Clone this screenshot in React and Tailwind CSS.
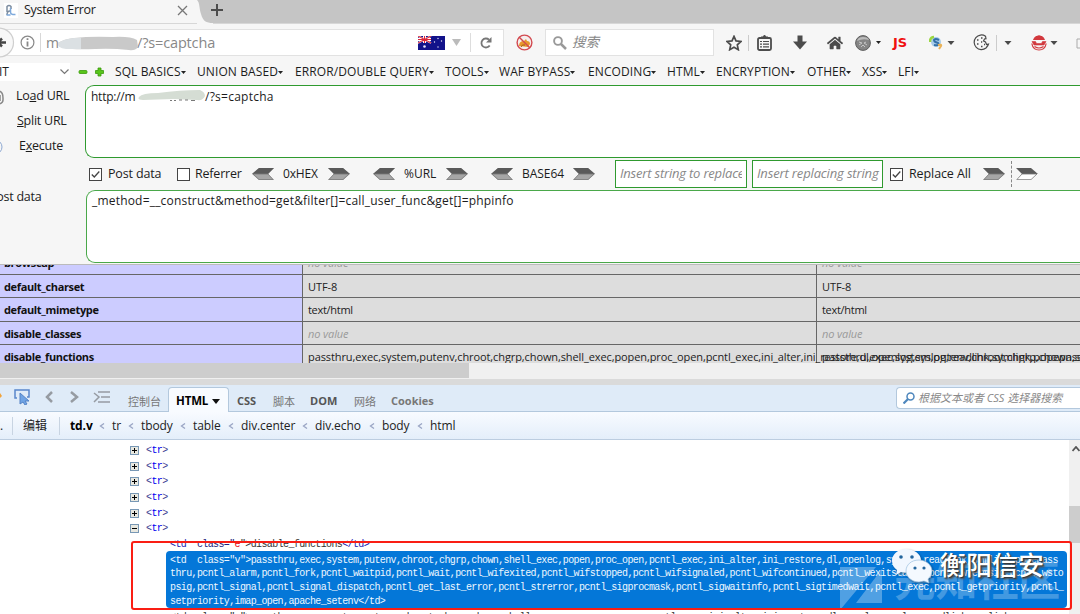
import { FaHome } from 'react-icons/fa';

const menus = [
  { label: 'SQL BASICS', cls: 'w-[82px]' },
  { label: 'UNION BASED', cls: 'w-[98px]' },
  { label: 'ERROR/DOUBLE QUERY', cls: 'w-[150px]' },
  { label: 'TOOLS', cls: 'w-[54px]' },
  { label: 'WAF BYPASS', cls: 'w-[89px]' },
  { label: 'ENCODING', cls: 'w-[79px]' },
  { label: 'HTML', cls: 'w-[49px]' },
  { label: 'ENCRYPTION', cls: 'w-[91px]' },
  { label: 'OTHER', cls: 'w-[55px]' },
  { label: 'XSS', cls: 'w-[36px]' },
  { label: 'LFI', cls: 'w-[40px]' },
];

const disabled =
  'passthru,exec,system,putenv,chroot,chgrp,chown,shell_exec,popen,proc_open,pcntl_exec,ini_alter,ini_restore,dl,openlog,syslog,readlink,symlink,popepassthru,pcntl_alarm';

const rows = [
  { name: 'browscap', value: null },
  { name: 'default_charset', value: 'UTF-8' },
  { name: 'default_mimetype', value: 'text/html', cls: 'tracking-[-0.3px]' },
  { name: 'disable_classes', value: null },
  { name: 'disable_functions', value: disabled },
];

const crumbs = [
  { label: 'tr', cls: 'w-[29px]' },
  { label: 'tbody', cls: 'w-[52px]' },
  { label: 'table', cls: 'w-[48px]' },
  { label: 'div.center', cls: 'w-[74px]' },
  { label: 'div.echo', cls: 'w-[67px]' },
  { label: 'body', cls: 'w-[48px]' },
  { label: 'html', cls: 'w-[40px]' },
];

const codeLines = [
  '<td  class="v">passthru,exec,system,putenv,chroot,chgrp,chown,shell_exec,popen,proc_open,pcntl_exec,ini_alter,ini_restore,dl,openlog,syslog,readlink,symlink,popepass',
  'thru,pcntl_alarm,pcntl_fork,pcntl_waitpid,pcntl_wait,pcntl_wifexited,pcntl_wifstopped,pcntl_wifsignaled,pcntl_wifcontinued,pcntl_wexitstatus,pcntl_wtermsig,pcntl_wsto',
  'psig,pcntl_signal,pcntl_signal_dispatch,pcntl_get_last_error,pcntl_strerror,pcntl_sigprocmask,pcntl_sigwaitinfo,pcntl_sigtimedwait,pcntl_exec,pcntl_getpriority,pcntl_',
  'setpriority,imap_open,apache_setenv</td>',
];

const Caret = ({ className = '' }) => (
  <svg className={`h-1 w-2 shrink-0 ${className}`} viewBox="0 0 8 4">
    <path d="M0.5 0h7L4 4z" fill="#4a4a4a" />
  </svg>
);

const Arrow = ({ left = false, hollow = false, className = '' }) => (
  <svg className={`h-3 w-[22px] shrink-0 ${left ? '-scale-x-100' : ''} ${className}`} viewBox="0 0 22 12">
    <path d="M0 0h15l7 6-7 6H0l6-6z" fill={hollow ? '#fff' : '#a6a6a6'} />
    <path d="M0 0h15l7 6H6z" fill="#5a5a5a" />
    <path d="M0.8 11.6 6 6h15l-6 5.6z" fill="none" stroke="#777" strokeWidth="0.8" />
  </svg>
);

const Checkbox = ({ checked = false }) => (
  <svg className="h-[13px] w-[13px] shrink-0" viewBox="0 0 13 13" fill="none" stroke="#444">
    <rect x="0.5" y="0.5" width="12" height="12" fill="#fff" />
    {checked && <path d="M2.8 6.5 5.3 9l5-5.5" strokeWidth="1.3" />}
  </svg>
);

const TabBar = () => (
  <div className="flex h-6 border-b border-[#d7d7d7] bg-[#c5c5c5]">
    <div className="flex w-[197px] items-center bg-[#f6f6f6] pb-[3px]">
      <svg className="ml-1 h-[15px] w-[14px]" viewBox="0 0 14 15" fill="none">
        <rect width="14" height="15" fill="#fff" />
        <path d="M3 9V3.5q2-2 4 0V6M6 8q-3 0-3 4" stroke="#7d8da0" strokeWidth="1.5" />
        <path d="M6.5 5v4q0 3 5 2.5M2.5 12h4" stroke="#7da9dc" strokeWidth="1.5" />
      </svg>
      <span className="ml-[6px] w-[153px] text-[12.5px] tracking-[-0.3px]">System Error</span>
      <svg className="h-[11px] w-[11px]" viewBox="0 0 11 11" stroke="#777" strokeWidth="1.3">
        <path d="m1 1 9 9m0-9-9 9" />
      </svg>
    </div>
    <svg className="h-6 w-4" viewBox="0 0 16 24">
      <path d="M0 0c3 3 2 8 4 14 2 7 5 9 12 9v1H0z" fill="#f6f6f6" />
    </svg>
    <svg className="-ml-[2px] mt-1 h-3 w-3" viewBox="0 0 12 12" stroke="#4c4c4c" strokeWidth="2">
      <path d="M6 0v12M0 6h12" />
    </svg>
  </div>
);

const NavBar = () => (
  <div className="flex h-[37px] items-center overflow-hidden bg-[#f6f6f6]">
    <div className="relative flex h-[27px] w-[504px] shrink-0 items-center border border-l-0 border-[#e2e2e2] bg-white">
      <svg className="-my-1 h-[31px] w-[15px] shrink-0" viewBox="0 0 15 31">
        <circle cx="-1" cy="15.5" r="14.5" fill="#f8f8f8" stroke="#cfcfcf" strokeWidth="1.2" />
        <path d="M0 15.5h6M2 11.5l-4 4 4 4" stroke="#444" strokeWidth="2.5" fill="none" />
      </svg>
      <svg className="ml-[5px] h-[15px] w-[15px] shrink-0" viewBox="0 0 15 15" fill="none" stroke="#888">
        <circle cx="7.5" cy="7.5" r="6.4" strokeWidth="1.2" />
        <path d="M7.5 6.5v5M7.5 3.2v1.8" strokeWidth="1.8" />
      </svg>
      <div className="ml-[5px] h-[19px] w-px bg-[#d8d8d8]" />
      <span className="ml-[5px] w-[91px] shrink-0 text-[14px] text-[#888]">m</span>
      <svg className="absolute left-[57px] top-[6px] h-4 w-[84px]" viewBox="0 0 84 16" preserveAspectRatio="none">
        <path d="M1 7q6-4 16-5Q34 0 56 1q17-1 24 3l1 7q-3 4-9 3-18-2-34-1-21 1-30-1-8-1-7-5z" fill="#c9c9c9" />
        <path d="M1 7q6-4 16-5l7 0v11H9Q0 12 1 7z" fill="#dbe0e3" />
      </svg>
      <span className="w-[281px] shrink-0 text-[14.5px] tracking-[-0.15px] text-[#888]">/?s=captcha</span>
      <svg className="h-[14px] w-[27px] shrink-0" viewBox="0 0 27 14">
        <rect width="27" height="14" fill="#12128a" />
        <path d="m0 0 13 7M13 0 0 7" stroke="#fff" strokeWidth="1.8" />
        <path d="M6.5 0v7M0 3.5h13" stroke="#fff" strokeWidth="3" />
        <path d="M6.5 0v7M0 3.5h13M0 0l13 7M13 0 0 7" stroke="#dc2638" strokeWidth="1.1" />
        <g fill="#e7e7f8">
          <circle cx="6.5" cy="10.5" r="1.3" />
          <circle cx="20" cy="2.5" r="0.7" />
          <circle cx="16.5" cy="6" r="0.7" />
          <circle cx="23.5" cy="5" r="0.7" />
          <circle cx="20" cy="11" r="0.7" />
        </g>
      </svg>
      <svg className="ml-[7px] h-[7px] w-[9px] shrink-0" viewBox="0 0 9 7">
        <path d="M0 0h9L4.5 7z" fill="#bbb" />
      </svg>
      <div className="ml-[9px] h-[19px] w-px bg-[#ddd]" />
      <svg className="ml-[9px] h-3 w-3 shrink-0" viewBox="0 0 12 12" fill="none" stroke="#777" strokeWidth="1.8">
        <path d="M9.7 8.5A4.5 4.5 0 1 1 9 2.7" />
        <path d="M11.5 0v5.5H6z" fill="#777" stroke="none" />
      </svg>
    </div>
    <svg className="ml-[12px] h-[17px] w-[17px] shrink-0" viewBox="0 0 17 17" fill="none">
      <circle cx="8.5" cy="8.5" r="7.5" fill="#f5eeee" />
      <path d="M3 12q0-5 5-5l2-2 1 2q3 0 3 3l-2 3z" fill="#e8982d" />
      <path d="M5 13q1-3 4-2" stroke="#a55a13" />
      <circle cx="8.5" cy="8.5" r="7.4" stroke="#d24a50" strokeWidth="1.4" />
      <path d="m3 3 11 11" stroke="#d24a50" strokeWidth="1.4" />
    </svg>
    <div className="ml-[12px] flex h-[27px] w-[169px] shrink-0 items-center border border-[#e2e2e2] bg-white">
      <svg className="ml-[7px] h-[14px] w-[14px]" viewBox="0 0 14 14" fill="none" stroke="#999">
        <circle cx="5" cy="5" r="3.9" strokeWidth="1.9" />
        <path d="m8 8 5 5" strokeWidth="2.5" />
      </svg>
      <span className="ml-[5px] text-[13.5px] italic text-[#888]">搜索</span>
    </div>
    <svg className="ml-3 h-4 w-4 shrink-0" viewBox="0 0 16 16" fill="none" stroke="#4c4c4c" strokeWidth="1.7">
      <path d="m8 1.4 2 4.5 5 .5-3.7 3.4 1 4.9L8 12.2l-4.3 2.5 1-4.9L1 6.4l5-.5z" />
    </svg>
    <div className="ml-[6px] h-4 w-px shrink-0 bg-[#ccc]" />
    <svg className="ml-2 h-4 w-[15px] shrink-0" viewBox="0 0 15 16" fill="none" stroke="#4c4c4c">
      <rect x="1" y="3" width="13" height="12" rx="1.5" strokeWidth="1.8" />
      <path d="M4 3V2h2l1.5-2L9 2h2v1" fill="#4c4c4c" />
      <path d="M3 6.5h2m1 0h6M3 9.2h2m1 0h6M3 11.9h2m1 0h6" strokeWidth="1.2" />
    </svg>
    <svg className="ml-[21px] h-[15px] w-[14px] shrink-0" viewBox="0 0 14 15">
      <path d="M4.5 0.5h5v6H14l-7 8-7-8h4.5z" fill="#4c4c4c" />
    </svg>
    <FaHome className="ml-[20px] h-4 w-4 shrink-0 text-[#4c4c4c]" />
    <svg className="ml-[12px] h-4 w-4 shrink-0" viewBox="0 0 16 16">
      <circle cx="8" cy="8" r="7.4" fill="#858585" stroke="#5f5f5f" />
      <path d="M2 6q1-4 6-4 5 0 6 3-6-2-12 1z" fill="#bbb" />
      <path d="m4 7 3 1-3 2m7-3-2 1 3 2M6 12l2-2 2 2" stroke="#c5c5c5" fill="none" />
    </svg>
    <svg className="ml-[5px] h-[3px] w-[5px] shrink-0" viewBox="0 0 5 3">
      <path d="M0 0h5L2.5 3z" fill="#222" />
    </svg>
    <span className="ml-[12px] w-[16px] shrink-0 font-['DejaVu_Sans',sans-serif] text-[13px] font-extrabold tracking-[0px] text-[#f01010]">JS</span>
    <svg className="ml-[20px] h-4 w-[15px] shrink-0" viewBox="0 0 15 16" fill="none">
      <circle cx="7" cy="7" r="5" fill="#a7cce9" />
      <path d="M1 7q0-5 4-5" stroke="#9bd641" strokeWidth="2.5" />
      <path d="M10 5q-4-2-5 0 0 2 4 3 2 3-4 2" stroke="#3470a8" strokeWidth="2" />
      <path d="M9 10q4-1 3 1l-2 3" stroke="#e9b35a" strokeWidth="2" />
    </svg>
    <Caret className="ml-[3px]" />
    <svg className="ml-[18px] h-[17px] w-[17px] shrink-0" viewBox="0 0 17 17" fill="none" stroke="#4a4a4a" strokeWidth="1.2">
      <path d="M12.5 2.2A7.3 7.3 0 1 0 13 14q2-2 2.5-4l-2 .5-1-2.5-2-1 1-2 1.5-.3z" />
      <path d="M4 6h1.5M8 4h1.5M4 10h1.5M8 8h1.2M8 12.5h1.5M11 10.5h1" strokeWidth="1.6" />
    </svg>
    <div className="ml-[6px] h-4 w-px shrink-0 bg-[#ccc]" />
    <Caret className="ml-[7px]" />
    <svg className="ml-[19px] h-4 w-4 shrink-0" viewBox="0 0 16 16" fill="none" stroke="#d2383d">
      <path d="M2.5 4.5Q4 .8 8 .8t5.5 3.7z" fill="#d2383d" />
      <path d="M1 6.5h3.5l1 2h5l1-2H15l-2 3.500H3z" fill="#d2383d" strokeWidth="0.6" />
      <path d="M.8 8.5Q2 15 8 15t7.2-6.5M3.5 11.5q4.5 3 9 0" strokeWidth="1.2" />
    </svg>
    <Caret className="ml-[3px]" />
    <svg className="ml-[18px] h-[13px] w-3 shrink-0" viewBox="0 0 12 13" fill="none" stroke="#aaa">
      <path d="M1 3v9h11M1 3h3l2 2V1h6" />
    </svg>
  </div>
);

const MenuBar = () => (
  <div className="flex h-[22px] items-center text-[12px]">
    <div className="flex h-[18px] w-[70px] shrink-0 items-center bg-white">
      <span className="w-[60px] overflow-hidden"><span className="-ml-[1px]">IT</span></span>
      <svg className="h-[6px] w-[9px]" viewBox="0 0 9 6" fill="none" stroke="#777" strokeWidth="1.2">
        <path d="m.5.5 4 4 4-4" />
      </svg>
    </div>
    <svg className="ml-[8px] h-[10px] w-[27px] shrink-0" viewBox="0 0 27 10" fill="#58c51b" stroke="#3b9b0b" strokeWidth="0.8">
      <rect x="1" y="3.5" width="8" height="3" rx="1" />
      <path d="M20 1h3v2.5h2.5v3H23V9h-3V6.5h-2.5v-3H20z" />
    </svg>
    <div className="ml-[10px] flex tracking-[0.1px]">
      {menus.map((m) => (
        <div key={m.label} className={`flex shrink-0 items-center whitespace-nowrap ${m.cls}`}>
          {m.label}
          <svg className="h-[3px] w-[5px]" viewBox="0 0 5 3">
            <path d="M0 0h5L2.5 3z" fill="#222" />
          </svg>
        </div>
      ))}
    </div>
  </div>
);

const HackBar = () => (
  <div className="flex h-[181px] shrink-0 overflow-hidden text-[12.5px] tracking-[-0.25px]">
    <div className="flex w-[85px] shrink-0 flex-col pt-px">
      <div className="flex h-[25px] items-center">
        <svg className="h-4 w-[16px]" viewBox="0 0 16 16" fill="none" stroke="#888" strokeWidth="1.5">
          <path d="M-2 2q5 0 5 7v2q0 3-4 4M0 6v6" />
        </svg>
        Lo<u>a</u>d URL
      </div>
      <div className="flex h-[25px] items-center pl-[17px]"><u>S</u>plit URL</div>
      <div className="flex h-[25px] items-center">
        <svg className="h-4 w-[19px]" viewBox="0 0 19 16" fill="none" stroke="#8ea9d2">
          <circle cx="-5" cy="8" r="7" />
        </svg>
        E<u>x</u>ecute
      </div>
      <div className="-ml-[11px] mt-[28px] h-5 leading-5">Post data</div>
    </div>
    <div className="flex min-w-0 grow flex-col pt-[2px]">
      <div className="relative h-[73px] shrink-0 rounded-l-[9px] border border-r-0 border-[#2f9a2f] bg-white pl-[5px] pt-[2px] leading-[18px]">
        <span className="inline-block w-[114px] text-[12px]">http://m</span>
        <span className="text-[12px] tracking-[0.25px]">/?s=captcha</span>
        <svg className="absolute left-[52px] top-[4px] h-3 w-[68px]" viewBox="0 0 68 12">
          <path d="M1 7Q4 3 20 3 42 0 62 0q5 2 5 6-2 5-8 4l-24-1-30 1q-6 0-4-3z" fill="#d5ddd4" />
          <path d="M32 10.5h2m2 0h2m3-.5h3m3 0h3m3 .5h4" stroke="#555" strokeWidth="0.8" />
        </svg>
      </div>
      <div className="flex h-8 shrink-0 items-center pl-[4px]">
        <Checkbox checked />
        <span className="ml-[6px] w-[69px] shrink-0 tracking-[-0.15px]">Post data</span>
        <Checkbox />
        <span className="ml-[5px] w-[57px] shrink-0 tracking-[-0.2px]">Referrer</span>
        <Arrow left />
        <span className="ml-[9px] w-[45px] shrink-0 text-[12px] tracking-[-0.15px]">0xHEX</span>
        <Arrow />
        <Arrow left className="ml-[23px]" />
        <span className="ml-[9px] w-[42px] shrink-0 text-[12px] tracking-normal">%URL</span>
        <Arrow />
        <Arrow left className="ml-[23px]" />
        <span className="ml-[9px] w-[51px] shrink-0 text-[12px] tracking-[-0.05px]">BASE64</span>
        <Arrow />
        <div className="ml-[20px] flex h-7 w-[132px] shrink-0 items-center border border-[#2f9a2f] bg-white px-1">
          <span className="overflow-hidden whitespace-nowrap text-[13px] italic tracking-[-0.2px] text-[#888]">Insert string to replace</span>
        </div>
        <div className="ml-[5px] flex h-7 w-[131px] shrink-0 items-center border border-[#2f9a2f] bg-white pl-1">
          <span className="whitespace-nowrap text-[13px] italic tracking-[-0.15px] text-[#888]">Insert replacing string</span>
        </div>
        <div className="ml-[7px] flex shrink-0 items-center">
          <Checkbox checked />
          <span className="ml-[6px] w-[74px] tracking-[-0.1px]">Replace All</span>
          <Arrow />
          <div className="ml-[6px] h-[26px] border-l border-dashed border-[#888]" />
          <Arrow hollow className="ml-[4px]" />
        </div>
      </div>
      <div className="ml-[1px] h-[73px] shrink-0 rounded-l-[9px] border border-r-0 border-[#4aa84a] bg-white pl-[5px] pt-[1px] text-[12px] leading-[18px] tracking-[0.19px]">
        _method=__construct&amp;method=get&amp;filter[]=call_user_func&amp;get[]=phpinfo
      </div>
    </div>
  </div>
);

const Value = ({ value, cls = '' }) =>
  value ? <span className={cls}>{value}</span> : <span className="italic text-[#999]">no value</span>;

const PhpInfo = () => (
  <div className="flex h-[99px] shrink-0 flex-col justify-start overflow-hidden border-t border-[#bbb] text-[11px] tracking-[-0.1px]">
    <div className="-mt-[14px]">
      {rows.map((row) => (
        <div key={row.name} className="grid h-[23.6px] grid-cols-[302.5px_514.5px_263px] grid-rows-[22.6px] whitespace-nowrap border-b border-[#666] bg-[#ddd] leading-[23px]">
          <div className="h-[22.6px] border-r border-[#666] bg-[#ccf] pl-1 font-bold tracking-[-0.35px] text-[#111]">{row.name}</div>
          <div className="h-[22.6px] border-r border-[#666] pl-[5.5px] text-[#222]"><Value value={row.value} cls={row.cls} /></div>
          <div className="h-[22.6px] pl-[5px] text-[#222]"><Value value={row.value} cls={row.cls} /></div>
        </div>
      ))}
    </div>
  </div>
);

const Firebug = () => (
  <>
    <div className="flex h-[27px] shrink-0 items-end border-b border-[#b3c8dd] bg-[#dfebf8] text-[11px] font-bold text-[#555]">
      <svg className="mb-[6px] h-4 w-[110px] shrink-0" viewBox="0 0 110 16" fill="none">
        <path d="M0 4l2 3-2 2z" fill="#f2a33a" />
        <path d="M17 9h-2V1h14v7h-2" stroke="#5a87ca" strokeWidth="1.5" />
        <path d="M20 4v11l3-2 2 3 2-1-2-3h4z" fill="#6fa3e4" stroke="#5583c6" />
        <path d="m52 3-5 5 5 5M71 3l6 5-6 5" stroke="#969ba2" strokeWidth="2.5" />
        <path d="m94 4 5 4-5 5M98 3h12m-9 5h9m-12 5h12" stroke="#969ba2" strokeWidth="1.5" />
      </svg>
      <span className="ml-[18px] w-[40px] shrink-0 pb-[1px] font-normal text-[#777]">控制台</span>
      <div className="-mb-px flex h-[25px] w-[61px] shrink-0 items-center rounded-t border border-b-0 border-[#b3c8dd] bg-[#f8fbff] pl-[7px] pt-[2px] text-[11.5px] tracking-[-0.15px] text-black">
        HTML
        <svg className="ml-1 h-[5px] w-2" viewBox="0 0 8 5"><path d="M0 0h8L4 5z" fill="#111" /></svg>
      </div>
      <span className="ml-[8px] w-[36px] pb-[2px]">CSS</span>
      <span className="w-[37px] pb-[1px] font-normal text-[#777]">脚本</span>
      <span className="w-[44px] pb-[2px] tracking-[0.1px]">DOM</span>
      <span className="w-[37px] pb-[1px] font-normal text-[#777]">网络</span>
      <span className="pb-[2px] text-[#777]">Cookies</span>
      <div className="mb-[2px] ml-auto flex h-[22px] w-[184px] shrink-0 items-center rounded-l-sm border border-r-0 border-[#b3c8dd] bg-white">
        <svg className="ml-[6px] h-3 w-3" viewBox="0 0 12 12" fill="none" stroke="#4e87bd">
          <circle cx="7.5" cy="4.5" r="3.5" strokeWidth="1.5" />
          <path d="m5 7-4.5 4.5" strokeWidth="2.2" />
        </svg>
        <span className="ml-[3px] whitespace-nowrap text-[11px] font-normal italic text-[#888]">根据文本或者 CSS 选择器搜索</span>
      </div>
    </div>
    <div className="flex h-[28px] shrink-0 items-center border-b border-[#bccde0] bg-gradient-to-b from-[#f8fbff] to-[#e4eefa] text-[12px] tracking-[-0.1px] text-[#222]">
      <span className="w-3 overflow-hidden whitespace-nowrap">.</span>
      <div className="h-[18px] w-px bg-[#c8d4e2]" />
      <span className="ml-[10px] w-[36px] text-[12px]">编辑</span>
      <div className="h-[18px] w-px bg-[#c8d4e2]" />
      <span className="ml-[10px] w-[29px] font-bold text-black">td.v</span>
      {crumbs.map((c) => (
        <div key={c.label} className={`flex shrink-0 items-center whitespace-nowrap ${c.cls}`}>
          <svg className="mr-[7px] h-[6px] w-[6px]" viewBox="0 0 6 6" fill="none" stroke="#9aa5c4" strokeWidth="1.3">
            <path d="M5 .5 1.5 3 5 5.5" />
          </svg>
          {c.label}
        </div>
      ))}
    </div>
  </>
);

const Toggle = ({ open = false }) => (
  <svg className="h-[9px] w-[9px]" viewBox="0 0 9 9">
    <rect x="0.5" y="0.5" width="8" height="8" fill="#e8e8e0" stroke="#7898b5" />
    <path d={open ? 'M2 4.5h5' : 'M2 4.5h5M4.5 2v5'} stroke="#000" />
  </svg>
);

const Watermark = () => (
  <div className="absolute left-[840px] top-[108px] h-[60px] w-[230px]">
    <svg className="absolute left-0 top-[19px] h-[44px] w-[43px] opacity-30" viewBox="0 0 43 44" fill="#fff">
      <path d="M0 0h36L0 43zM42 2v34H16z" />
    </svg>
    <span className="absolute left-[54px] top-[13px] whitespace-nowrap text-[42px] font-bold leading-[48px] text-white/25">先知社区</span>
    <svg className="absolute left-[51px] top-0 h-9 w-[43px] drop-shadow-[1px_1px_1px_#0006]" viewBox="0 0 43 36">
      <path d="M15 1C7 1 1 6 1 13c0 4 2 7 5 9l-1 5 5-3q3 1 7 0c8 0 13-6 13-12C30 6 23 1 15 1z" fill="#f1f7ff" />
      <circle cx="10" cy="9" r="1.8" fill="#23659d" />
      <circle cx="21" cy="9" r="1.8" fill="#23659d" />
      <path d="M28 12c-8 0-13 5-13 11s6 11 13 11l5-1 5 2-1-4q4-3 4-8c0-6-6-11-13-11z" fill="#f4f9ff" stroke="#9abfe0" strokeWidth="0.7" />
      <circle cx="24" cy="20" r="1.6" fill="#23659d" />
      <circle cx="33" cy="20" r="1.6" fill="#23659d" />
    </svg>
    <span className="absolute left-[100px] top-[4px] whitespace-nowrap text-[26px] font-medium leading-[32px] tracking-normal text-white [text-shadow:1px_1px_1px_#333,2px_2px_2px_#555]">衡阳信安</span>
  </div>
);

const CodePanel = () => (
  <div className="relative flex h-[174px] shrink-0 overflow-hidden bg-white font-['Liberation_Mono','Noto_Sans_CJK_SC',monospace] text-[10px] tracking-[-0.62px]">
    <div className="flex min-w-0 grow flex-col pt-[3px]">
      {[0, 1, 2, 3, 4, 5].map((i) => (
        <div key={i} className="flex h-[15.6px] shrink-0 items-center pl-[130px]">
          <Toggle open={i === 5} />
          <span className="ml-[7px] text-[#3a4090]">&lt;<span className="text-[#0000f0]">tr</span>&gt;</span>
        </div>
      ))}
      <div className="h-[14px] shrink-0 whitespace-pre pl-[170px] leading-[16px] text-[#333]">
        <span className="text-[#2020b0]">{'<td  '}</span><span className="text-[#20207a]">class=&quot;</span><span className="text-red-600">e</span>&quot;&gt;disable_functions<span className="text-[#2020b0]">&lt;/td&gt;</span>
      </div>
      <div className="ml-[166px] h-[57px] w-[901px] shrink-0 rounded-sm bg-[#0477d8] pl-1 pt-[3px] text-[#eef7ff]">
        {codeLines.map((line) => (
          <div key={line} className="h-[13.7px] whitespace-pre leading-[13.7px]">{line}</div>
        ))}
      </div>
      <div className="mt-[3px] h-[14px] shrink-0 whitespace-pre pl-[170px] leading-[14px] text-[#333]">{codeLines[0]}</div>
    </div>
    <div className="w-[11px] shrink-0 bg-[#f0f0f0]">
      <svg className="ml-[3px] mt-[6px] h-[6px] w-[8px]" viewBox="0 0 8 6" fill="none" stroke="#555" strokeWidth="1.8">
        <path d="m.5 5 3.5-4 3.5 4" />
      </svg>
      <div className="mt-[54px] h-[37px] bg-[#cdcdcd]" />
    </div>
    <Watermark />
    <div className="absolute left-[131px] top-[101px] h-[69px] w-[941px] rounded-[3px] border-2 border-[#fa1e14]" />
  </div>
);

const App = () => (
  <div className="flex h-[614px] w-[1080px] flex-col overflow-hidden bg-[#f6f6f6] font-['Open_Sans','Noto_Sans_CJK_SC',sans-serif] text-[#1c1c1c]">
    <TabBar />
    <NavBar />
    <MenuBar />
    <HackBar />
    <PhpInfo />
    <div className="h-4 shrink-0 bg-[#f0f0f0]">
      <div className="h-[15px] w-[469px] bg-[#cdcdcd]" />
    </div>
    <div className="h-[6px] shrink-0 bg-[#dadada]" />
    <Firebug />
    <CodePanel />
  </div>
);

export default App;
